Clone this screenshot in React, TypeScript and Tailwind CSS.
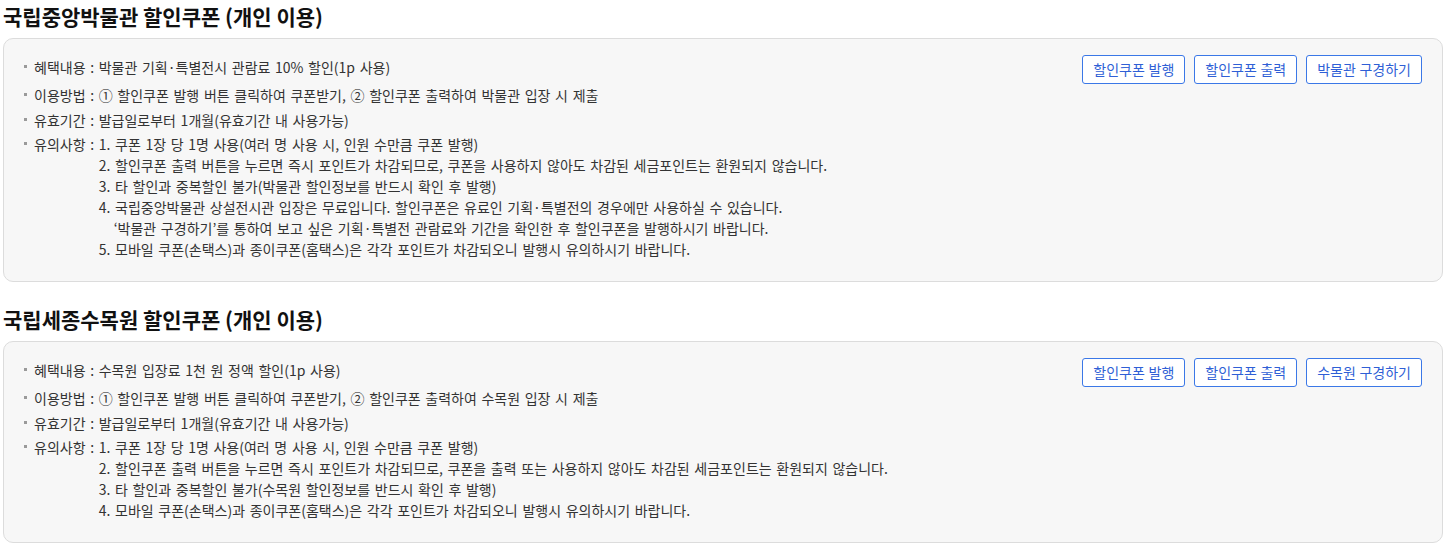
import React from "react";

interface Coupon {
  title: string;
  benefit: string;
  howTo: string;
  period: string;
  notes: React.ReactNode[];
  tourLabel: string;
}

const coupons: Coupon[] = [
  {
    title: "국립중앙박물관 할인쿠폰 (개인 이용)",
    benefit: "박물관 기획·특별전시 관람료 10% 할인(1p 사용)",
    howTo: "① 할인쿠폰 발행 버튼 클릭하여 쿠폰받기, ② 할인쿠폰 출력하여 박물관 입장 시 제출",
    period: "발급일로부터 1개월(유효기간 내 사용가능)",
    notes: [
      "1. 쿠폰 1장 당 1명 사용(여러 명 사용 시, 인원 수만큼 쿠폰 발행)",
      "2. 할인쿠폰 출력 버튼을 누르면 즉시 포인트가 차감되므로, 쿠폰을 사용하지 않아도 차감된 세금포인트는 환원되지 않습니다.",
      "3. 타 할인과 중복할인 불가(박물관 할인정보를 반드시 확인 후 발행)",
      <>
        4. 국립중앙박물관 상설전시관 입장은 무료입니다. 할인쿠폰은 유료인 기획·특별전의 경우에만 사용하실 수 있습니다.
        <span className="block pl-[15px]">
          ‘박물관 구경하기’를 통하여 보고 싶은 기획·특별전 관람료와 기간을 확인한 후 할인쿠폰을 발행하시기 바랍니다.
        </span>
      </>,
      "5. 모바일 쿠폰(손택스)과 종이쿠폰(홈택스)은 각각 포인트가 차감되오니 발행시 유의하시기 바랍니다.",
    ],
    tourLabel: "박물관 구경하기",
  },
  {
    title: "국립세종수목원 할인쿠폰 (개인 이용)",
    benefit: "수목원 입장료 1천 원 정액 할인(1p 사용)",
    howTo: "① 할인쿠폰 발행 버튼 클릭하여 쿠폰받기, ② 할인쿠폰 출력하여 수목원 입장 시 제출",
    period: "발급일로부터 1개월(유효기간 내 사용가능)",
    notes: [
      "1. 쿠폰 1장 당 1명 사용(여러 명 사용 시, 인원 수만큼 쿠폰 발행)",
      "2. 할인쿠폰 출력 버튼을 누르면 즉시 포인트가 차감되므로, 쿠폰을 출력 또는 사용하지 않아도 차감된 세금포인트는 환원되지 않습니다.",
      "3. 타 할인과 중복할인 불가(수목원 할인정보를 반드시 확인 후 발행)",
      "4. 모바일 쿠폰(손택스)과 종이쿠폰(홈택스)은 각각 포인트가 차감되오니 발행시 유의하시기 바랍니다.",
    ],
    tourLabel: "수목원 구경하기",
  },
];

function Row({ label, className, children }: { label: string; className: string; children: React.ReactNode }) {
  return (
    <li className={`relative flex pl-[10px] ${className}`}>
      {/* bullet */}
      <span className="absolute left-0 top-[8px] w-[3px] h-[3px] bg-[#9a9a9a]" />
      <span className="shrink-0 whitespace-pre">{label} : </span>
      <div>{children}</div>
    </li>
  );
}

function CouponBox({ coupon }: { coupon: Coupon }) {
  return (
    <section className="mb-[23px]">
      <h2 className="text-[21px] leading-[28px] font-bold text-[#111]">{coupon.title}</h2>
      <div className="mt-[8px] flex justify-between rounded-[10px] border border-[#dcdcdc] bg-[#f7f7f7] pl-[20px] pr-[20px] pt-[18px] pb-[21px]">
        <ul className="text-[14px] leading-[21px] text-[#333] [word-spacing:1.5px]">
          <Row label="혜택내용" className="">{coupon.benefit}</Row>
          <Row label="이용방법" className="mt-[7px]">{coupon.howTo}</Row>
          <Row label="유효기간" className="mt-[4px]">{coupon.period}</Row>
          <Row label="유의사항" className="mt-[3px]">
            {coupon.notes.map((n, i) => (
              <div key={i}>{n}</div>
            ))}
          </Row>
        </ul>
        <div className="flex gap-[9px] items-start -mt-[2px]">
          {["할인쿠폰 발행", "할인쿠폰 출력", coupon.tourLabel].map((b) => (
            <button
              key={b}
              className="h-[29px] px-[10px] rounded-[3px] border border-[#3b78e7] bg-white text-[14px] text-[#2f5fd6] [word-spacing:0.5px]"
            >
              {b}
            </button>
          ))}
        </div>
      </div>
    </section>
  );
}

export default function App() {
  return (
    <div
      className="bg-white px-[3px] pt-[2px] w-[1446px]"
      style={{ fontFamily: '"Noto Sans CJK KR", "Noto Sans", sans-serif' }}
    >
      {coupons.map((c) => (
        <CouponBox key={c.title} coupon={c} />
      ))}
    </div>
  );
}
